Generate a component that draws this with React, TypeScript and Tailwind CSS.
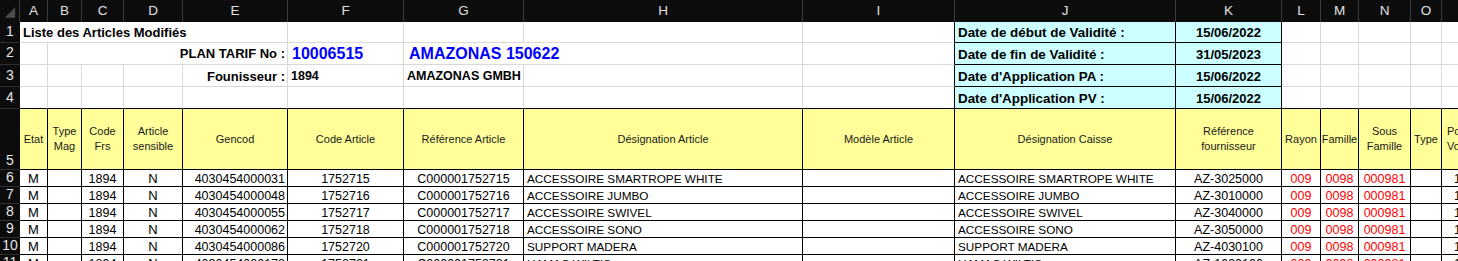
import React from "react";

type CellProps = { className?: string; children?: React.ReactNode };

function Cell({ className = "", children }: CellProps) {
  return (
    <div className={"flex min-w-0 overflow-hidden whitespace-nowrap border-r border-b " + className}>
      {children}
    </div>
  );
}

const letters = ["A", "B", "C", "D", "E", "F", "G", "H", "I", "J", "K", "L", "M", "N", "O", "P"];

const data: string[][] = [
  ["M", "", "1894", "N", "4030454000031", "1752715", "C000001752715", "ACCESSOIRE SMARTROPE WHITE", "", "ACCESSOIRE SMARTROPE WHITE", "AZ-3025000", "009", "0098", "000981", "", "1"],
  ["M", "", "1894", "N", "4030454000048", "1752716", "C000001752716", "ACCESSOIRE JUMBO", "", "ACCESSOIRE JUMBO", "AZ-3010000", "009", "0098", "000981", "", "1"],
  ["M", "", "1894", "N", "4030454000055", "1752717", "C000001752717", "ACCESSOIRE SWIVEL", "", "ACCESSOIRE SWIVEL", "AZ-3040000", "009", "0098", "000981", "", "1"],
  ["M", "", "1894", "N", "4030454000062", "1752718", "C000001752718", "ACCESSOIRE SONO", "", "ACCESSOIRE SONO", "AZ-3050000", "009", "0098", "000981", "", "1"],
  ["M", "", "1894", "N", "4030454000086", "1752720", "C000001752720", "SUPPORT MADERA", "", "SUPPORT MADERA", "AZ-4030100", "009", "0098", "000981", "", "1"],
  ["M", "", "1894", "N", "4030454000178", "1752721", "C000001752721", "HAMAC WILTIS", "", "HAMAC WILTIS", "AZ-1030100", "009", "0098", "000981", "", "1"],
];

const dataAlign = [
  "justify-center text-[13px]",
  "justify-center text-[12.5px]",
  "justify-center text-[12.5px]",
  "justify-center text-[13px]",
  "justify-end pr-[2px] text-[12.5px]",
  "justify-center text-[12.5px]",
  "justify-center text-[12.5px]",
  "justify-start pl-[3px] text-[11.75px]",
  "justify-start pl-[3px] text-[11.75px]",
  "justify-start pl-[3px] text-[11.75px]",
  "justify-center text-[12.5px]",
  "justify-center text-[#ff0000] text-[12.5px]",
  "justify-center text-[#ff0000] text-[12.5px]",
  "justify-center text-[#ff0000] text-[12.5px]",
  "justify-center text-[12.5px]",
  "justify-start pl-[12px] text-[12.5px]",
];

const headers: React.ReactNode[] = [
  "Etat",
  <>Type<br />Mag</>,
  <>Code<br />Frs</>,
  <>Article<br />sensible</>,
  "Gencod",
  "Code Article",
  "Référence Article",
  "Désignation Article",
  "Modèle Article",
  "Désignation Caisse",
  <>Référence<br />fournisseur</>,
  "Rayon",
  "Famille",
  <>Sous<br />Famille</>,
  "Type",
  <>Poids<br />Volume</>,
];

function RowHead({ n, className = "" }: { n: number; className?: string }) {
  return (
    <div className={"flex items-end justify-center bg-[#0c0c0c] border-b border-[#2e2e2e] text-[#e6e6e6] text-[14px] leading-[15px] " + className}>
      {n}
    </div>
  );
}

const G = "border-[#d9d9d9]";
const DL = "bg-[#ccffff] border-black items-end pb-[2px] pl-[3px] font-bold text-[13.4px] leading-[15px]";
const DV = "bg-[#ccffff] border-black items-end justify-center pb-[2px] font-bold text-[13px] leading-[15px]";

export default function App() {
  return (
    <div className="w-[1458px] h-[261px] overflow-hidden bg-white font-['Liberation_Sans',Arial,sans-serif] text-black">
      <div className="grid grid-cols-[20px_28px_34px_42px_59px_105px_116px_120px_279px_152px_221px_106px_39px_38px_52px_31px_60px] grid-rows-[22px_21px_22px_22px_22px_61px_17px_17px_17px_17px_17px_17px]">
        {/* column header row */}
        <div className="flex items-end justify-end bg-[#0c0c0c] border-r border-[#3a3a3a]">
          <svg width="20" height="22" viewBox="0 0 20 22">
            <polygon points="16,7 16,18 5,18" fill="#4d4d4d" />
          </svg>
        </div>
        {letters.map((l) => (
          <div
            key={l}
            className="flex items-center justify-center pt-[1px] bg-[#0c0c0c] border-r border-[#3a3a3a] text-[#e0e0e0] text-[13.5px]"
          >
            {l}
          </div>
        ))}

        {/* Row 1 */}
        <RowHead n={1} className="pb-[3px]" />
        <Cell className={"col-span-5 items-end pb-[2px] pl-[3px] font-bold text-[13px] leading-[15px] " + G}>
          Liste des Articles Modifiés
        </Cell>
        <Cell className={G} />
        <Cell className={G} />
        <Cell className={G} />
        <Cell className={"border-b-[#d9d9d9] border-r-black"} />
        <Cell className={DL}>Date de début de Validité :</Cell>
        <Cell className={DV}>15/06/2022</Cell>
        <Cell className={G} />
        <Cell className={G} />
        <Cell className={G} />
        <Cell className={G} />
        <Cell className={G} />

        {/* Row 2 */}
        <RowHead n={2} className="pb-[4px]" />
        <Cell className={G} />
        <Cell className={"col-span-4 items-end justify-end pb-[3px] pr-[2px] font-bold text-[13px] leading-[15px] " + G}>
          PLAN TARIF No :
        </Cell>
        <Cell className={"items-end pb-[1px] pl-[4px] font-bold text-[16px] leading-[18px] text-[#0000ff] " + G}>
          10006515
        </Cell>
        <Cell className={"col-span-2 items-end pb-[1px] pl-[5px] font-bold text-[16px] leading-[18px] text-[#0000ff] " + G}>
          AMAZONAS 150622
        </Cell>
        <Cell className={"border-b-[#d9d9d9] border-r-black"} />
        <Cell className={DL}>Date de fin de Validité :</Cell>
        <Cell className={DV}>31/05/2023</Cell>
        <Cell className={G} />
        <Cell className={G} />
        <Cell className={G} />
        <Cell className={G} />
        <Cell className={G} />

        {/* Row 3 */}
        <RowHead n={3} className="pb-[3px]" />
        <Cell className={G} />
        <Cell className={G} />
        <Cell className={G} />
        <Cell className={G} />
        <Cell className={"items-end justify-end pb-[2px] pr-[2px] font-bold text-[13px] leading-[15px] " + G}>
          Founisseur :
        </Cell>
        <Cell className={"items-end pb-[2px] pl-[3px] font-bold text-[12.5px] leading-[15px] " + G}>
          1894
        </Cell>
        <Cell className={"items-end pb-[2px] pl-[3px] font-bold text-[12.5px] leading-[15px] " + G}>
          AMAZONAS GMBH
        </Cell>
        <Cell className={G} />
        <Cell className={"border-b-[#d9d9d9] border-r-black"} />
        <Cell className={DL}>Date d'Application PA :</Cell>
        <Cell className={DV}>15/06/2022</Cell>
        <Cell className={G} />
        <Cell className={G} />
        <Cell className={G} />
        <Cell className={G} />
        <Cell className={G} />

        {/* Row 4 */}
        <RowHead n={4} className="pb-[3px]" />
        <Cell className="border-r-[#d9d9d9] border-b-black" />
        <Cell className="border-r-[#d9d9d9] border-b-black" />
        <Cell className="border-r-[#d9d9d9] border-b-black" />
        <Cell className="border-r-[#d9d9d9] border-b-black" />
        <Cell className="border-r-[#d9d9d9] border-b-black" />
        <Cell className="border-r-[#d9d9d9] border-b-black" />
        <Cell className="border-r-[#d9d9d9] border-b-black" />
        <Cell className="border-r-[#d9d9d9] border-b-black" />
        <Cell className="border-black" />
        <Cell className={DL}>Date d'Application PV :</Cell>
        <Cell className={DV}>15/06/2022</Cell>
        <Cell className="border-r-[#d9d9d9] border-b-black" />
        <Cell className="border-r-[#d9d9d9] border-b-black" />
        <Cell className="border-r-[#d9d9d9] border-b-black" />
        <Cell className="border-r-[#d9d9d9] border-b-black" />
        <Cell className="border-r-[#d9d9d9] border-b-black" />

        {/* Row 5 header */}
        <RowHead n={5} className="pb-[1px]" />
        {headers.map((h, i) => (
          <div
            key={i}
            className={
              "flex items-center border-r border-b border-black bg-[#ffff99] text-[11px] leading-[15px] text-[#1a1a1a] overflow-hidden whitespace-nowrap " +
              (i === 15 ? "justify-start pl-[5px] text-left" : "justify-center text-center")
            }
          >
            <div>{h}</div>
          </div>
        ))}

        {/* Data rows */}
        {data.map((row, r) => (
          <React.Fragment key={r}>
            <RowHead n={6 + r} className="pb-[1px]" />
            {row.map((v, c) => (
              <div
                key={c}
                className={
                  "flex items-end border-r border-b border-black leading-[14px] overflow-hidden whitespace-nowrap " +
                  dataAlign[c]
                }
              >
                {v}
              </div>
            ))}
          </React.Fragment>
        ))}
      </div>
    </div>
  );
}
